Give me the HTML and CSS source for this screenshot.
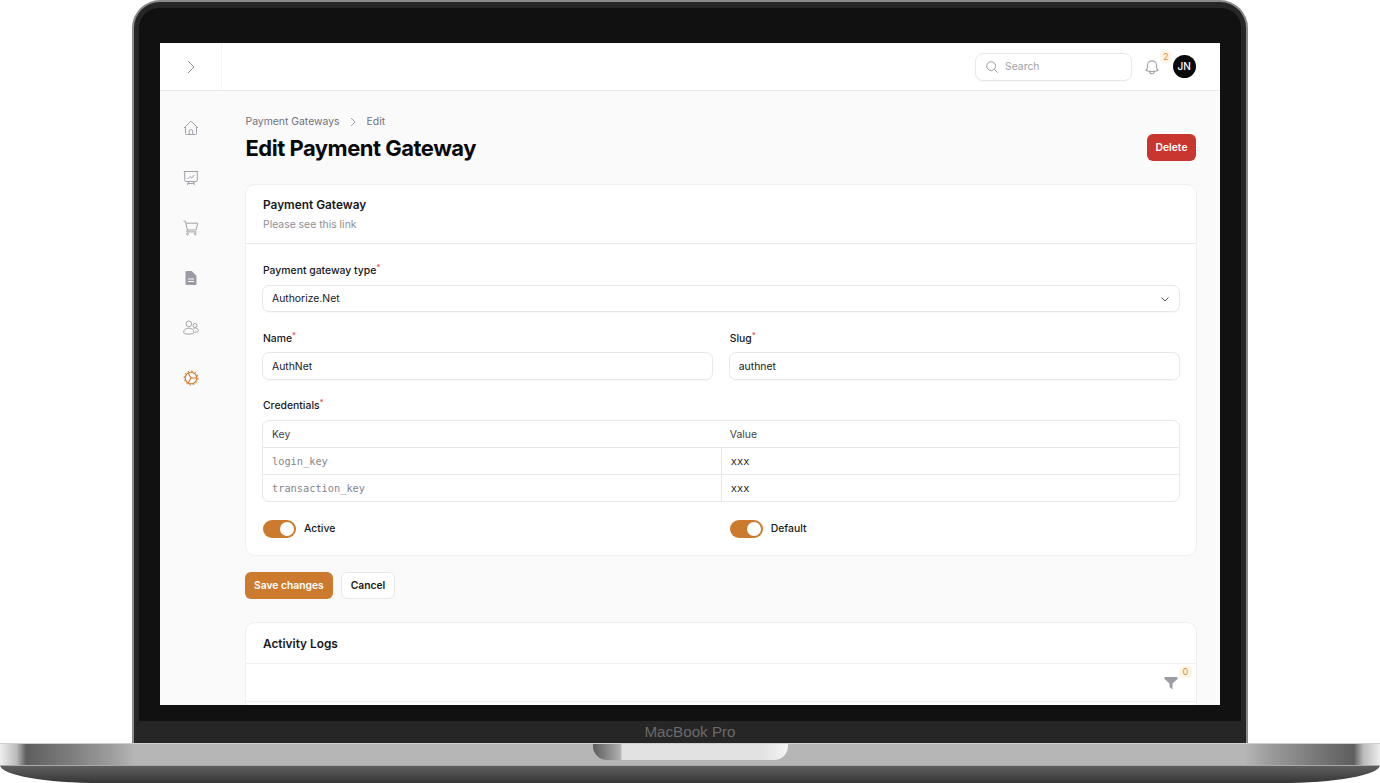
FILE: index.html
```html
<!DOCTYPE html>
<html lang="en">
<head>
    <meta charset="UTF-8">
    <meta name="viewport" content="width=device-width, initial-scale=1.0">
    <title>Edit Payment Gateway</title>
    <link rel="stylesheet" href="styles.css">
</head>
<body>

    <div class="lid">
        <div class="bezel">
            <div class="screen">

                <!-- Top bar -->
                <header class="topbar">
                    <div class="topbar-toggle">
                        <svg class="icon-chevron" viewBox="0 0 12 16"><path d="M3 2l6 6-6 6"/></svg>
                    </div>
                    <div class="topbar-right">
                        <div class="search">
                            <svg class="icon-search" viewBox="0 0 16 16"><circle cx="7" cy="7" r="5"/><path d="M10.7 10.7L14.5 14.5"/></svg>
                            <span>Search</span>
                        </div>
                        <div class="bell">
                            <svg class="icon-bell" viewBox="0 0 16 16"><path d="M10.1 11.9c1.100-.1 2.200-.4 3.300-.8-.9-1-1.400-2.300-1.400-3.600V6.500a4 4 0 0 0-8 0v1c0 1.300-.5 2.600-1.400 3.600 1.100.4 2.200.7 3.300.8m4.200 0a20 20 0 0 1-4.200 0m4.200 0a2.100 2.100 0 1 1-4.200 0"/></svg>
                            <span class="badge badge-bell">2</span>
                        </div>
                        <div class="avatar">JN</div>
                    </div>
                </header>

                <div class="layout">
                    <!-- Sidebar -->
                    <nav class="sidebar">
                        <svg class="nav-icon" viewBox="0 0 16 16"><path d="M1 8l6.300-6.300a1 1 0 0 1 1.400 0L15 8M2.500 6.500v7a1 1 0 0 0 1 1h9a1 1 0 0 0 1-1v-7M6.300 14.500v-4a.7.7 0 0 1 .7-.7h2a.7.7 0 0 1 .7.7v4"/></svg>
                        <svg class="nav-icon" viewBox="0 0 16 16"><path d="M.7 1.500h14.600M1.700 1.500v9a1 1 0 0 0 1 1h10.600a1 1 0 0 0 1-1v-9M5.500 11.500l-1 3.500M10.500 11.500l1 3.500M4.800 13.500h6.400M4.500 9l2.500-2.500 1.800 1.500 2.700-3"/></svg>
                        <svg class="nav-icon" viewBox="0 0 16 16"><path d="M.5 1.200h1.900l.5 2m0 0l1.500 6.800h8.600l1.800-6.800H2.900zM4.500 10l-.8 1.900h10"/><circle cx="4.500" cy="14" r=".9"/><circle cx="12.300" cy="14" r=".9"/></svg>
                        <svg class="nav-icon nav-icon-solid" viewBox="0 0 16 16"><path d="M3.500 1h5.200L13.500 5.800v8.200a1 1 0 0 1-1 1h-9a1 1 0 0 1-1-1V2a1 1 0 0 1 1-1zM5 8.500v1h6v-1zM5 11v1h6v-1z" fill-rule="evenodd"/></svg>
                        <svg class="nav-icon" viewBox="0 0 16 16"><circle cx="5.800" cy="3.800" r="2.800"/><circle cx="12" cy="5.500" r="2"/><path d="M.6 12.500c0-2.600 2.300-4.400 5.200-4.400s5.200 1.800 5.200 4.400c0 1-2.300 1.600-5.200 1.600s-5.200-.6-5.200-1.600zM10.500 8.500c.5-.3 1-.5 1.700-.5 1.900 0 3.200 1.200 3.200 2.900 0 .9-1.400 1.300-3.500 1.300"/></svg>
                        <svg class="nav-icon nav-icon-active" viewBox="0 0 16 16"><circle cx="8" cy="8" r="5.800"/><circle class="gear-teeth" cx="8" cy="8" r="6.900"/><path d="M8 8L5.200 3M8 8h5.800M8 8l-2.800 5"/></svg>
                    </nav>

                    <!-- Page content -->
                    <main class="content">
                        <div class="page-head">
                            <div class="page-title">
                                <div class="breadcrumb">
                                    <span>Payment Gateways</span>
                                    <svg class="icon-crumb" viewBox="0 0 8 10"><path d="M2 1l4 4-4 4"/></svg>
                                    <span>Edit</span>
                                </div>
                                <h1>Edit Payment Gateway</h1>
                            </div>
                            <button class="btn btn-danger">Delete</button>
                        </div>

                        <section class="card">
                            <div class="card-head">
                                <h3>Payment Gateway</h3>
                                <p>Please see this link</p>
                            </div>
                            <div class="card-body">
                                <div class="field">
                                    <label>Payment gateway type<sup>*</sup></label>
                                    <div class="control control-select">
                                        <span>Authorize.Net</span>
                                        <svg class="icon-select" viewBox="0 0 10 10"><path d="M1.500 3.500L5 7l3.500-3.500"/></svg>
                                    </div>
                                </div>
                                <div class="field-row">
                                    <div class="field">
                                        <label>Name<sup>*</sup></label>
                                        <div class="control">AuthNet</div>
                                    </div>
                                    <div class="field">
                                        <label>Slug<sup>*</sup></label>
                                        <div class="control">authnet</div>
                                    </div>
                                </div>
                                <div class="field">
                                    <label>Credentials<sup>*</sup></label>
                                    <table class="kv-table">
                                        <thead>
                                            <tr><th>Key</th><th>Value</th></tr>
                                        </thead>
                                        <tbody>
                                            <tr><td class="mono muted">login_key</td><td class="mono">xxx</td></tr>
                                            <tr><td class="mono muted">transaction_key</td><td class="mono">xxx</td></tr>
                                        </tbody>
                                    </table>
                                </div>
                                <div class="field-row switch-row">
                                    <div class="switch-field"><span class="switch"><i></i></span>Active</div>
                                    <div class="switch-field"><span class="switch"><i></i></span>Default</div>
                                </div>
                            </div>
                        </section>

                        <div class="actions">
                            <button class="btn btn-primary">Save changes</button>
                            <button class="btn btn-plain">Cancel</button>
                        </div>

                        <section class="card card-logs">
                            <div class="logs-head"><h3>Activity Logs</h3></div>
                            <div class="logs-tools">
                                <div class="filter">
                                    <svg class="icon-filter" viewBox="0 0 14 14"><path d="M.5 1h13v2L8.500 7.500V13.500L5.500 11V7.500L.5 3z"/></svg>
                                    <span class="badge badge-filter">0</span>
                                </div>
                            </div>
                        </section>
                    </main>
                </div>
            </div>
        </div>
        <div class="chin">MacBook Pro</div>
    </div>

    <div class="base">
        <div class="notch"></div>
    </div>
    <div class="foot"></div>

</body>
</html>
```

FILE: styles.css
```css
* {
    box-sizing: border-box;
}
html, body {
    margin: 0;
    height: 783px;
    overflow: hidden;
    background: #fff;
}
body {
    font-family: Inter, "Noto Sans", sans-serif;
    font-size: 10.400px;
    line-height: 16px;
    color: #18181b;
}

/* laptop frame */
.lid {
    width: 1116px;
    height: 743px;
    margin: 0 auto;
    padding: 6px 5px 0;
    background: #262626;
    border: 2px solid #8a8a8a;
    border-bottom: none;
    border-radius: 28px 28px 0 0;
}
.bezel {
    height: 713px;
    padding: 35px 21px 16px;
    background: #111;
    border-radius: 20px 20px 0 0;
}
.chin {
    height: 22px;
    text-align: center;
    font-family: "Liberation Sans", Arial, sans-serif;
    font-size: 15.200px;
    line-height: 22px;
    color: #6a6a6a;
}
.base {
    height: 22px;
    border-top: 1px solid #d0d0d0;
    background: linear-gradient(90deg, #eee 0, #bbb 1.200%, #5e5e5e 1.900%, #7c7c7c 5%, #9c9c9c 8%, #b6b6b6 9.800%, #b6b6b6 90.200%, #9c9c9c 92%, #7c7c7c 95%, #5e5e5e 98.100%, #bbb 98.800%, #eee 100%);
}
.notch {
    width: 195px;
    height: 16px;
    margin: 0 auto;
    border-radius: 0 0 14px 14px;
    background: linear-gradient(90deg, #5c5c5c 0, #b0b0b0 14%, #e2e2e2 15%, #e2e2e2 86%, #f4f4f4 100%);
}
.foot {
    height: 18px;
    border-top: 1px solid #a8a8a8;
    border-radius: 0 0 100px 100px / 0 0 18px 18px;
    background: linear-gradient(180deg, #5f5f5f, #363636);
}

/* app shell */
.screen {
    width: 1060px;
    height: 662px;
    overflow: hidden;
    background: #fafafa;
}
.topbar {
    display: flex;
    justify-content: space-between;
    height: 48px;
    background: #fff;
    border-bottom: 1px solid #e8e8ea;
}
.topbar-toggle {
    display: flex;
    align-items: center;
    justify-content: center;
    width: 62px;
    border-right: 1px solid #f4f4f5;
}
.topbar-right {
    display: flex;
    align-items: center;
    padding-right: 24px;
}
.search {
    display: flex;
    align-items: center;
    gap: 6px;
    width: 156.500px;
    height: 28px;
    padding-left: 9px;
    color: #a1a1aa;
    border: 1px solid #e8e8ea;
    border-radius: 8px;
    box-shadow: 0 1px 1px rgba(0, 0, 0, .03);
}
.bell {
    position: relative;
    height: 18px;
    margin-left: 11px;
}
.avatar {
    width: 23.500px;
    height: 23.500px;
    margin-left: 12px;
    border-radius: 50%;
    background: #09090b;
    color: #fff;
    font-size: 10px;
    font-weight: 500;
    line-height: 23.500px;
    text-align: center;
}
.badge {
    position: absolute;
    width: 12.500px;
    height: 12.500px;
    border-radius: 4px;
    background: #fff5e6;
    color: #d98a3a;
    font-size: 9px;
    line-height: 12.500px;
    text-align: center;
}
.badge-bell {
    top: -7px;
    right: -11.500px;
}
.badge-filter {
    top: -10px;
    right: -14px;
}

.layout {
    display: flex;
}
.sidebar {
    flex: none;
    display: flex;
    flex-direction: column;
    align-items: center;
    gap: 34px;
    width: 61px;
    padding-top: 29px;
}
.content {
    flex: 1;
    padding: 22.500px 23.500px 0 24px;
}

/* icons */
svg {
    display: block;
    flex: none;
    fill: none;
    stroke: #a1a1aa;
    stroke-width: 1;
}
.nav-icon {
    width: 16px;
    height: 16px;
}
.nav-icon-solid {
    fill: #9b9ba5;
    stroke: none;
}
.nav-icon-active {
    stroke: #cc7a2e;
    stroke-width: 1.100;
}
.gear-teeth {
    stroke-width: 1;
    stroke-dasharray: 1.800 1.800;
}
.icon-chevron {
    width: 12px;
    height: 16px;
    stroke: #8e8e96;
}
.icon-search {
    width: 14px;
    height: 14px;
    stroke: #8e8e96;
}
.icon-bell {
    width: 18px;
    height: 18px;
    stroke: #a1a1aa;
}
.icon-crumb {
    width: 8px;
    height: 10px;
}
.icon-select {
    width: 10px;
    height: 10px;
    stroke: #52525b;
}
.icon-filter {
    width: 14px;
    height: 14px;
    fill: #9b9ba5;
    stroke: none;
}

/* page */
.page-head {
    display: flex;
    justify-content: space-between;
    align-items: flex-end;
}
.page-title {
    padding-left: .5px;
}
.breadcrumb {
    display: flex;
    align-items: center;
    gap: 9.500px;
    color: #71717a;
}
h1 {
    margin: 4.500px 0 0;
    font-size: 22px;
    font-weight: 700;
    line-height: 28px;
    letter-spacing: -.5px;
    color: #09090b;
}
h3 {
    margin: 0;
    font-size: 11.850px;
    font-weight: 600;
    line-height: 16px;
}
.btn {
    height: 27px;
    padding: 0 9px;
    border: none;
    border-radius: 6px;
    font-family: inherit;
    font-size: 10.300px;
    font-weight: 600;
}
.btn-danger {
    margin: 0 .5px 1.500px 0;
    padding: 0 8.500px;
    background: #c9352f;
    color: #fff;
}
.btn-primary {
    background: #cc7a2e;
    color: #fff;
}
.btn-plain {
    background: #fff;
    color: #18181b;
    border: 1px solid #e8e8ea;
}

/* cards */
.card {
    margin-top: 22px;
    background: #fff;
    border: 1px solid #f0f0f1;
    border-radius: 10px;
}
.card-head {
    padding: 12px 17px 10px;
    border-bottom: 1px solid #e8e8ea;
}
.card-head p {
    margin: 4px 0 0;
    color: #8e8e96;
}
.card-body {
    display: flex;
    flex-direction: column;
    gap: 18.500px;
    padding: 19px 16px 17.500px;
}
.field-row {
    display: grid;
    grid-template-columns: 1fr 1fr;
    gap: 16px;
}
.switch-row {
    margin-top: -1px;
}
label {
    display: block;
    margin-bottom: 5.500px;
    padding-left: 1px;
    font-weight: 500;
}
sup {
    color: #e5484d;
    font-size: 8px;
    line-height: 0;
}
.control {
    height: 27.500px;
    padding: 0 9px;
    line-height: 28px;
    border: 1px solid #e8e8ea;
    border-radius: 7px;
    box-shadow: 0 1px 1px rgba(0, 0, 0, .03);
}
.control-select {
    display: flex;
    align-items: center;
    justify-content: space-between;
    padding-top: 1px;
    line-height: 16px;
}
.kv-table {
    width: 100%;
    border-collapse: separate;
    border-spacing: 0;
    table-layout: fixed;
    border: 1px solid #e8e8ea;
    border-radius: 7px;
}
.kv-table th,
.kv-table td {
    padding: 0 9px;
    font-weight: 400;
    text-align: left;
}
.kv-table th {
    height: 26.500px;
    padding-top: 2px;
    color: #3f3f46;
}
.kv-table td {
    height: 27px;
    padding-bottom: 1px;
    border-top: 1px solid #e8e8ea;
}
.kv-table td + td {
    border-left: 1px solid #e8e8ea;
}
.mono {
    font-family: "DejaVu Sans Mono", "Liberation Mono", monospace;
    font-size: 10.300px;
}
.muted {
    color: #85858d;
}
.switch-field {
    display: flex;
    align-items: center;
    gap: 8px;
    padding-left: 1px;
    font-weight: 500;
}
.switch {
    display: flex;
    justify-content: flex-end;
    align-items: center;
    width: 33px;
    height: 18px;
    padding: 2px;
    border-radius: 10px;
    background: #cc7a2e;
}
.switch i {
    width: 14px;
    height: 14px;
    border-radius: 50%;
    background: #fff;
}
.actions {
    display: flex;
    gap: 8px;
    margin-top: 15.500px;
}
.card-logs {
    margin-top: 23px;
    height: 200px;
}
.logs-head {
    padding: 13px 17px 11px;
    border-bottom: 1px solid #f0f0f1;
}
.logs-tools {
    display: flex;
    justify-content: flex-end;
    height: 38px;
    padding: 12px 18px 0 0;
    border-bottom: 1px solid #f0f0f1;
}
.filter {
    position: relative;
    height: 14px;
}
```
